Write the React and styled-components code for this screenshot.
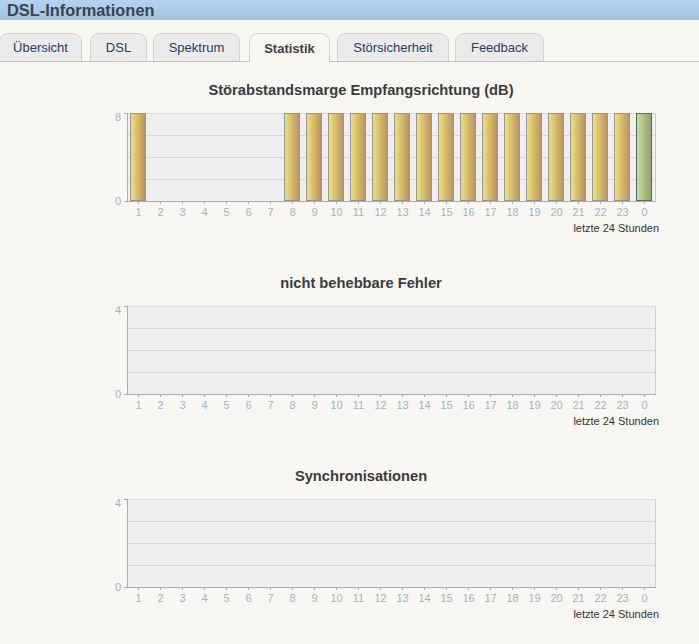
import React from "react";
import styled, { createGlobalStyle } from "styled-components";

const GlobalStyle = createGlobalStyle`
  html, body {
    margin: 0;
    padding: 0;
    background: #f8f7f2;
    font-family: "Liberation Sans", Arial, sans-serif;
  }
`;

const Page = styled.div`
  width: 699px;
  min-height: 644px;
  background: #f8f7f2;
  overflow: hidden;
`;

const Header = styled.div`
  height: 20px;
  display: flex;
  align-items: center;
  padding-left: 7px;
  background: linear-gradient(#b3d3f3, #a3c3e3);
  color: #3e4348;
  font-size: 16.4px;
  font-weight: bold;
`;

const TabBar = styled.div`
  display: flex;
  align-items: flex-end;
  padding-top: 13px;
  margin-left: -1px;
  border-bottom: 1px solid #c6c6c2;
`;

const Tab = styled.div`
  display: flex;
  align-items: center;
  justify-content: center;
  box-sizing: border-box;
  width: ${(p) => p.$w}px;
  margin-left: ${(p) => p.$gap}px;
  border: 1px solid #d2d2d0;
  border-bottom: none;
  border-radius: 9px 9px 0 0;
  background: ${(p) => (p.$active ? "#f8f7f2" : "#ebebeb")};
  color: ${(p) => (p.$active ? "#3e4044" : "#1e3d6a")};
  font-size: 13px;
  font-weight: ${(p) => (p.$active ? "bold" : "normal")};
  margin-bottom: ${(p) => (p.$active ? "-1px" : "0")};
  height: ${(p) => (p.$active ? "29px" : "28px")};
`;

const Section = styled.section`
  width: 598px;
  margin-left: 62px;
  margin-top: ${(p) => p.$top}px;
  display: flex;
  flex-direction: column;
`;

const Title = styled.div`
  height: 18px;
  line-height: 18px;
  text-align: center;
  font-size: 14.7px;
  font-weight: bold;
  color: #3a3c40;
  white-space: nowrap;
`;

const Caption = styled.div`
  margin-top: 2px;
  height: 14px;
  line-height: 14px;
  text-align: right;
  padding-right: 1px;
  font-size: 11px;
  color: #333;
`;

const tabs = [
  { label: "Übersicht", w: 83, gap: 0 },
  { label: "DSL", w: 57, gap: 8 },
  { label: "Spektrum", w: 87, gap: 6 },
  { label: "Statistik", w: 81, gap: 9, active: true },
  { label: "Störsicherheit", w: 112, gap: 7 },
  { label: "Feedback", w: 89, gap: 6 },
];

const hours = [1, 2, 3, 4, 5, 6, 7, 8, 9, 10, 11, 12, 13, 14, 15, 16, 17, 18, 19, 20, 21, 22, 23, 0];

// plot geometry inside the svg
const PL = 65; // left axis
const SLOT = 22;
const PW = SLOT * 24;
const PT = 14;
const PH = 88;
const FONT = "Liberation Sans, Arial, sans-serif";

function BarChart({ max, values, id }) {
  const bottom = PT + PH;
  return (
    <svg width="598" height="120" style={{ display: "block" }}>
      <defs>
        <linearGradient id={`gold-${id}`} x1="0" x2="1" y1="0" y2="0">
          <stop offset="0" stopColor="#ede57f" />
          <stop offset="0.5" stopColor="#d5b96b" />
          <stop offset="1" stopColor="#b9955f" />
        </linearGradient>
        <linearGradient id={`green-${id}`} x1="0" x2="1" y1="0" y2="0">
          <stop offset="0" stopColor="#c9de98" />
          <stop offset="0.5" stopColor="#adc083" />
          <stop offset="1" stopColor="#8e9e6f" />
        </linearGradient>
      </defs>
      {/* plot background */}
      <rect x={PL} y={PT} width={PW} height={PH} fill="#efefef" />
      <line x1={PL} x2={PL + PW} y1={PT + 0.5} y2={PT + 0.5} stroke="#d6dee8" />
      <line x1={PL + PW + 0.5} x2={PL + PW + 0.5} y1={PT} y2={bottom} stroke="#c3cfdc" />
      {/* grid lines */}
      {[1, 2, 3].map((i) => (
        <line
          key={i}
          x1={PL}
          x2={PL + PW}
          y1={PT + (PH / 4) * i + 0.5}
          y2={PT + (PH / 4) * i + 0.5}
          stroke="#cfd8e2"
        />
      ))}
      {/* bars */}
      {values.map((v, i) => {
        if (!v) return null;
        const h = (v / max) * PH;
        const last = i === values.length - 1;
        return (
          <rect
            key={i}
            x={PL + i * SLOT + 3.5}
            y={bottom - h + 0.5}
            width={15}
            height={h - 1}
            fill={`url(#${last ? "green" : "gold"}-${id})`}
            stroke={last ? "#56686a" : "#8d96a2"}
          />
        );
      })}
      {/* axes */}
      <line x1={PL + 0.5} x2={PL + 0.5} y1={PT} y2={bottom + 1} stroke="#9fb0c4" />
      <line x1={PL - 3} x2={PL + PW + 1} y1={bottom + 0.5} y2={bottom + 0.5} stroke="#9fb0c4" />
      <line x1={PL - 3} x2={PL} y1={PT + 0.5} y2={PT + 0.5} stroke="#9fb0c4" />
      <text x={PL - 6} y={PT + 8} textAnchor="end" fontSize="11" fill="#a4b2c3" fontFamily={FONT}>
        {max}
      </text>
      <text x={PL - 6} y={bottom + 4} textAnchor="end" fontSize="11" fill="#a4b2c3" fontFamily={FONT}>
        0
      </text>
      {/* hour ticks and labels */}
      {hours.map((h, i) => {
        const cx = PL + i * SLOT + 11;
        return (
          <g key={i}>
            <line x1={cx + 0.5} x2={cx + 0.5} y1={bottom} y2={bottom + 3} stroke="#9fb0c4" />
            <text x={cx + 0.5} y={bottom + 15} textAnchor="middle" fontSize="11" fill="#a4b2c3" fontFamily={FONT}>
              {h}
            </text>
          </g>
        );
      })}
    </svg>
  );
}

const snr = [8, 0, 0, 0, 0, 0, 0, 8, 8, 8, 8, 8, 8, 8, 8, 8, 8, 8, 8, 8, 8, 8, 8, 8];
const empty = new Array(24).fill(0);

const charts = [
  { id: "snr", title: "Störabstandsmarge Empfangsrichtung (dB)", max: 8, values: snr, top: 19 },
  { id: "err", title: "nicht behebbare Fehler", max: 4, values: empty, top: 39 },
  { id: "sync", title: "Synchronisationen", max: 4, values: empty, top: 39 },
];

export default function App() {
  return (
    <Page>
      <GlobalStyle />
      <Header>DSL-Informationen</Header>
      <TabBar>
        {tabs.map((t) => (
          <Tab key={t.label} $w={t.w} $gap={t.gap} $active={t.active}>
            {t.label}
          </Tab>
        ))}
      </TabBar>
      {charts.map((c) => (
        <Section key={c.id} $top={c.top}>
          <Title>{c.title}</Title>
          <BarChart id={c.id} max={c.max} values={c.values} />
          <Caption>letzte 24 Stunden</Caption>
        </Section>
      ))}
    </Page>
  );
}
